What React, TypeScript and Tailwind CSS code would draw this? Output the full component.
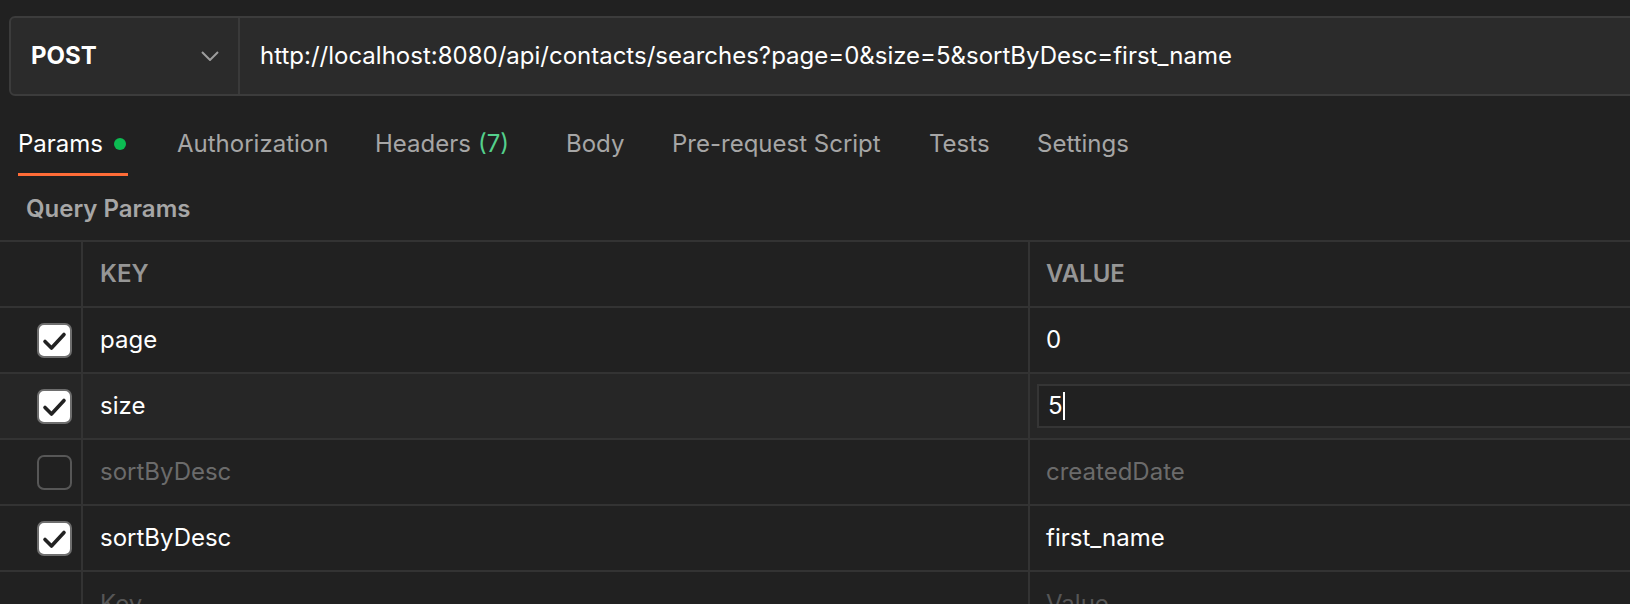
import React from "react";

const font = { fontFamily: "Inter, 'Noto Sans', sans-serif" };

function Check({ on }: { on: boolean }) {
  if (!on) {
    return <div className="w-[35px] h-[35px] rounded-[7px] border-2 border-[#575757]" />;
  }
  return (
    <div className="w-[35px] h-[35px] rounded-[7px] border-2 border-[#6e6e6e] bg-white">
      <svg viewBox="0 0 31 31" className="w-full h-full">
        <path d="M6 16.5 L12.5 23 L25 9.5" fill="none" stroke="#222" strokeWidth="3.6" strokeLinecap="round" strokeLinejoin="round" />
      </svg>
    </div>
  );
}

type Row = { check?: boolean; key: string; value: string; kind: "on" | "off" | "empty"; hover?: boolean };

const rows: Row[] = [
  { check: true, key: "page", value: "0", kind: "on" },
  { check: true, key: "size", value: "5", kind: "on", hover: true },
  { check: false, key: "sortByDesc", value: "createdDate", kind: "off" },
  { check: true, key: "sortByDesc", value: "first_name", kind: "on" },
  { key: "Key", value: "Value", kind: "empty" },
];

const tabs = [
  { label: "Authorization", w: "w-[198px]" },
  { label: "Headers", count: "(7)", w: "w-[191px]" },
  { label: "Body", w: "w-[106px]" },
  { label: "Pre-request Script", w: "w-[257px]" },
  { label: "Tests", w: "w-[108px]" },
  { label: "Settings", w: "w-[160px]" },
];

export default function App() {
  return (
    <div className="w-[1630px] h-[604px] bg-[#212121] overflow-hidden text-[24px]" style={font}>
      {/* request bar */}
      <div className="mt-[16px] ml-[9px] w-[1660px] h-[80px] flex border-2 border-[#3c3c3c] rounded-[6px] bg-[#2b2b2b]">
        <div className="w-[229px] flex items-center pl-[20px] pr-[19px] border-r-2 border-[#3a3a3a]">
          <span className="font-bold text-white flex-1">POST</span>
          <svg width="18" height="10" viewBox="0 0 18 10">
            <path d="M1 1 L9 9 L17 1" fill="none" stroke="#9d9d9d" strokeWidth="2" />
          </svg>
        </div>
        <div className="flex items-center pl-[20px] text-white">
          http://localhost:8080/api/contacts/searches?page=0&amp;size=5&amp;sortByDesc=first_name
        </div>
      </div>

      {/* tabs */}
      <div className="mt-[34px] ml-[18px] flex">
        <div className="w-[159px] flex flex-col">
          <div className="h-[28px] leading-[28px] flex items-center text-white">
            Params
            <span className="ml-[11px] w-[12px] h-[12px] rounded-full bg-[#0cbb52]" />
          </div>
          <div className="mt-[15px] w-[110px] h-[3px] bg-[#ff6c37]" />
        </div>
        {tabs.map((t) => (
          <div key={t.label} className={`${t.w} h-[28px] leading-[28px] text-[#a6a6a6]`}>
            {t.label}
            {t.count && <span className="ml-[7px] text-[#54d08c]">{t.count}</span>}
          </div>
        ))}
      </div>

      {/* query params */}
      <div className="mt-[19px] ml-[26px] h-[28px] leading-[28px] font-semibold text-[#a6a6a6]">
        Query Params
      </div>

      {/* table */}
      <div className="mt-[17px] w-[1700px] border-t-2 border-[#333333]">
        <div className="h-[66px] flex border-b-2 border-[#333333]">
          <div className="w-[81px]" />
          <div className="w-[947px] border-l-2 border-[#333333] flex items-center pl-[17px] font-semibold text-[#969696]">KEY</div>
          <div className="flex-1 border-l-2 border-[#333333] flex items-center pl-[16px] font-semibold text-[#969696]">VALUE</div>
        </div>
        {rows.map((r, i) => {
          const color =
            r.kind === "on" ? "text-white" : r.kind === "off" ? "text-[#6b6b6b]" : "text-[#565656]";
          return (
            <div key={i} className={`h-[66px] flex border-b-2 border-[#333333] ${r.hover ? "bg-[#262626]" : ""}`}>
              <div className="w-[81px] flex items-center pl-[37px]">
                {r.check !== undefined && <Check on={r.check} />}
              </div>
              <div className={`w-[947px] border-l-2 border-[#333333] flex items-center pl-[17px] ${color}`}>{r.key}</div>
              <div className={`flex-1 border-l-2 border-[#333333] flex items-center ${color}`}>
                {r.hover ? (
                  <div className="ml-[7px] flex-1 h-[44px] border-2 border-[#353535] bg-[#212121] flex items-center pl-[9px]">
                    {r.value}
                    <span className="w-[2px] h-[28px] bg-white" />
                  </div>
                ) : (
                  <span className="pl-[16px]">{r.value}</span>
                )}
              </div>
            </div>
          );
        })}
      </div>
    </div>
  );
}
